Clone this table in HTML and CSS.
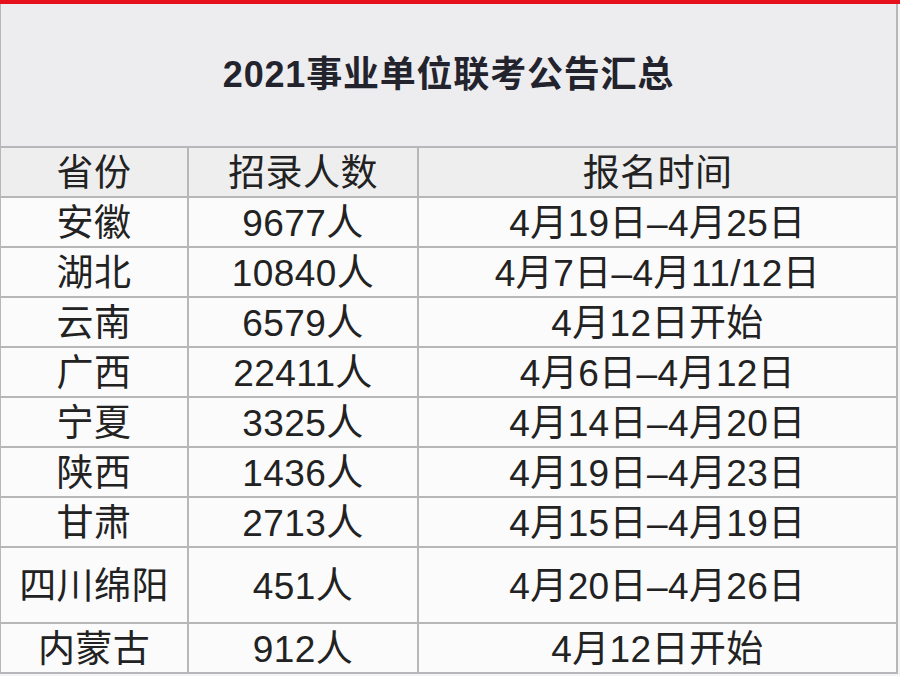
FILE: index.html
```html
<!DOCTYPE html>
<html lang="zh-CN">
<head>
<meta charset="utf-8">
<title>2021事业单位联考公告汇总</title>
<link rel="stylesheet" href="styles.css">
</head>
<body>
<div class="redbar"></div>
<div class="sheet">
  <div class="cell title">2021事业单位联考公告汇总</div>
  <div class="cell head">省份</div>
  <div class="cell head">招录人数</div>
  <div class="cell head">报名时间</div>

  <div class="cell">安徽</div><div class="cell">9677人</div><div class="cell">4月19日–4月25日</div>
  <div class="cell">湖北</div><div class="cell">10840人</div><div class="cell">4月7日–4月11/12日</div>
  <div class="cell">云南</div><div class="cell">6579人</div><div class="cell">4月12日开始</div>
  <div class="cell">广西</div><div class="cell">22411人</div><div class="cell">4月6日–4月12日</div>
  <div class="cell">宁夏</div><div class="cell">3325人</div><div class="cell">4月14日–4月20日</div>
  <div class="cell">陕西</div><div class="cell">1436人</div><div class="cell">4月19日–4月23日</div>
  <div class="cell">甘肃</div><div class="cell">2713人</div><div class="cell">4月15日–4月19日</div>
  <div class="cell">四川绵阳</div><div class="cell">451人</div><div class="cell">4月20日–4月26日</div>
  <div class="cell">内蒙古</div><div class="cell">912人</div><div class="cell">4月12日开始</div>
</div>
</body>
</html>
```

FILE: styles.css
```css
html, body {
  margin: 0;
  padding: 0;
  background: #f4f4f6;
}

body {
  width: 900px;
  height: 676px;
  overflow: hidden;
  font-family: "Liberation Sans", "Noto Sans CJK SC", sans-serif;
  color: #222;
}

.redbar {
  height: 4px;
  background: #e5101b;
}

.sheet {
  width: 895px;
  display: grid;
  grid-template-columns: 186px 228px 477px;
  grid-template-rows: 142px repeat(8, 48px) 74px 48px;
  gap: 2px;
  background: #b7b7b9;
  padding: 0 2px 2px 1px;
}

.cell {
  display: flex;
  align-items: center;
  justify-content: center;
  padding-top: 3px;
  background: #fbfbfc;
  font-size: 37px;
  letter-spacing: 0.4px;
  line-height: 1;
  white-space: nowrap;
}

.cell.title {
  grid-column: 1 / -1;
  padding-top: 0;
  background: #ededef;
  font-weight: bold;
  font-size: 36px;
  letter-spacing: 0.8px;
  color: #23232e;
}

.cell.head {
  background: #eeeeef;
}
```
